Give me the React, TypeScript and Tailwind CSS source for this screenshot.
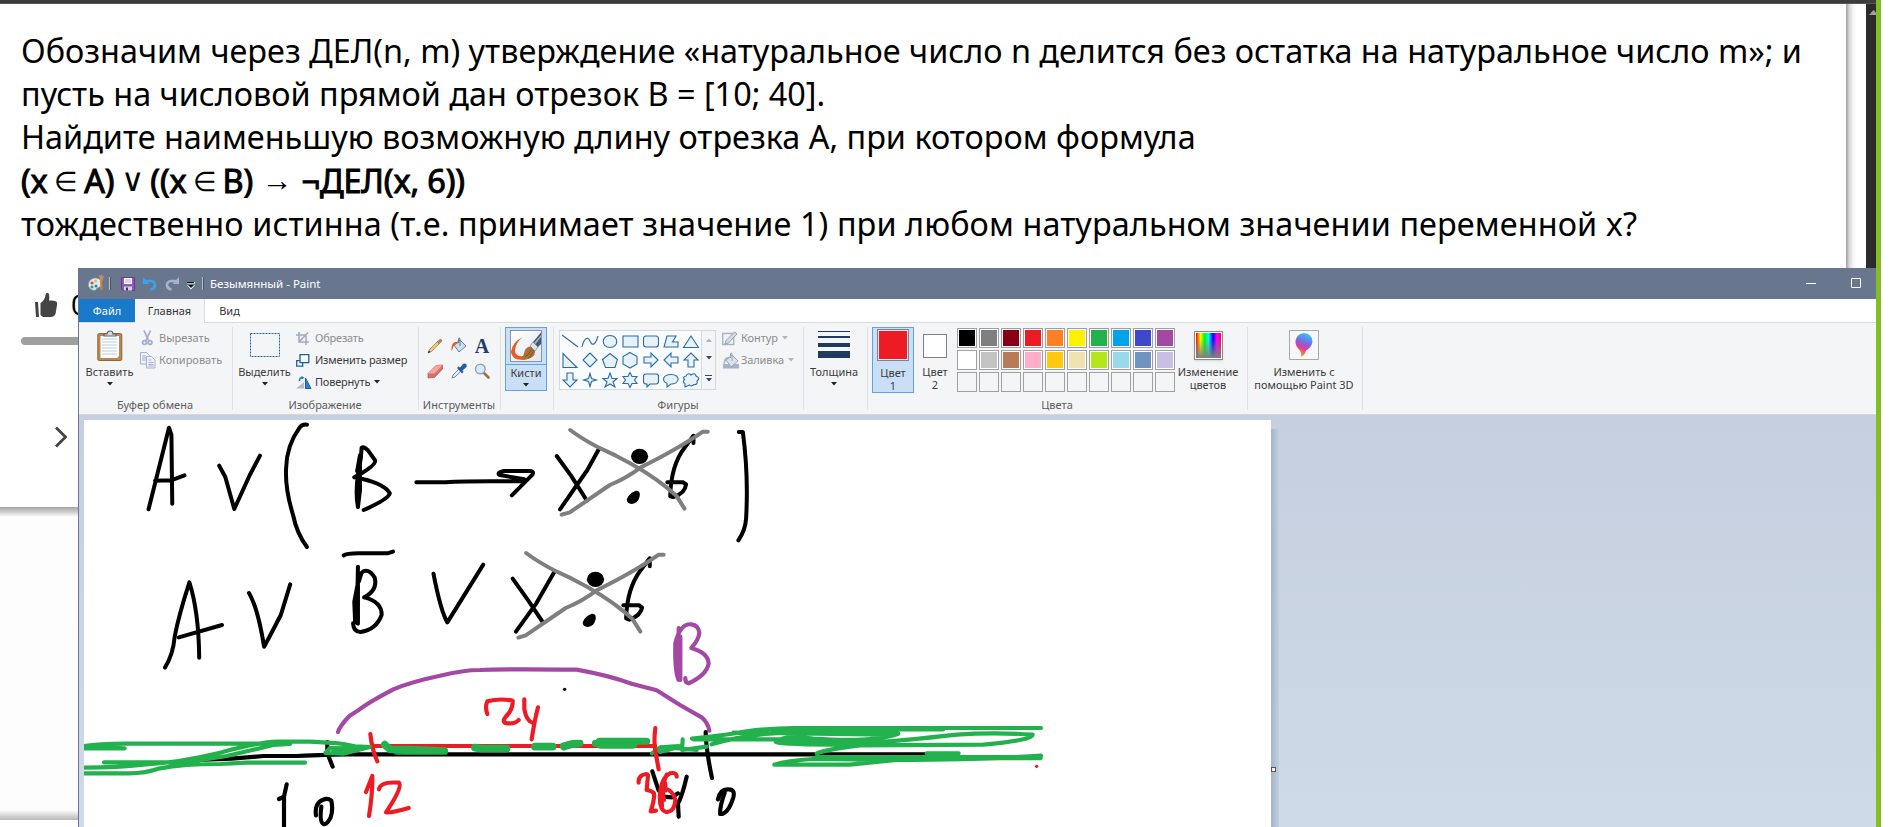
import type { ReactNode } from "react";

const Ui = "font-['Noto_Sans','Open_Sans',sans-serif]";

function Caret({ className = "text-[#222]" }: { className?: string }) {
  return (
    <svg width="6" height="4" viewBox="0 0 6 4" className={className}>
      <path d="M0 0h6L3 3.4z" fill="currentColor" />
    </svg>
  );
}

function Group({ width, label, children }: { width: string; label?: string; children: ReactNode }) {
  return (
    <div className={`${width} flex h-[91px] shrink-0 flex-col pt-1`}>
      <div className="relative flex h-[71px] border-r border-[#dfe1e4]">{children}</div>
      <div className="h-[12px] border-r border-[#dfe1e4] pr-px text-center leading-[14px] whitespace-nowrap text-[#5c5c5c]">{label}</div>
    </div>
  );
}

function Big({ width, icon, lines, caret, className = "" }: { width: string; icon: ReactNode; lines: string[]; caret?: boolean; className?: string }) {
  return (
    <div className={`${width} ${className} flex shrink-0 flex-col items-center whitespace-nowrap`}>
      <div className="flex h-[38px] items-center justify-center pb-0.5">{icon}</div>
      {lines.map((l) => (
        <div key={l} className="leading-[13px]">{l}</div>
      ))}
      {caret && <div className="pt-1"><Caret /></div>}
    </div>
  );
}

function Small({ icon, label, off, caret, className = "" }: { icon: ReactNode; label: string; off?: boolean; caret?: boolean; className?: string }) {
  return (
    <div className={`flex h-[22px] items-center whitespace-nowrap ${className} ${off ? "text-[#8d8d8d]" : ""}`}>
      <div className="flex w-[19px] items-center">{icon}</div>
      <span>{label}</span>
      {caret && <span className="ml-1"><Caret className={off ? "text-[#b5b5b5]" : "text-[#222]"} /></span>}
    </div>
  );
}

const shapes: string[] = [
  "M1 3L17 15",
  "M1 15C3 6 7 4 9 9S14 14 17 4",
  "M9 3.500C18 3.500 18 15.500 9 15.500S0 3.500 9 3.500",
  "M2 4h15v11H2z",
  "M4 4h10q2.500 0 2.500 3v5q0 3-2.500 3H4q-2.500 0-2.500-3V7q0-3 2.500-3z",
  "M5 4h9l-3.500 6H16v5H2z",
  "M9 4L16.500 15.500H1.500z",
  "M2 2.500V16.500H16z",
  "M9 2L16 9L9 16L2 9z",
  "M9 2.500L16.500 8.500L14 16.500H4.500L1.500 8.500z",
  "M9 1.500L16 5.500V13L9 17L2 13V5.500z",
  "M2 6H9V2L16 9L9 16V12H2z",
  "M16 6H9V2L2 9L9 16V12H16z",
  "M6 16V9H2L9 2L16 9H12V16z",
  "M6 2V9H2L9 16L16 9H12V2z",
  "M9 2.500L10.500 7.500L15.500 9L10.500 10.500L9 15.500L7.500 10.500L2.500 9L7.500 7.500z",
  "M9 2L11 7.500H16L12 11L14 16L9 13L4 16L6 11L2 7.500H7z",
  "M9 1.500L11 5.500H16L13.500 9L16 12.500H11L9 16.500L7 12.500H2L4.500 9L2 5.500H7z",
  "M4 3h10q2.500 0 2.500 2.500v5q0 2.500-2.500 2.500H8L5 16V13H4q-2.500 0-2.500-2.500v-5q0-2.500 2.500-2.500z",
  "M9 3.500C19 3.500 18 13 9 13L5 16L5 12.300C-1 10 1 3.500 9 3.500z",
  "M4 5Q6 1 9 4Q13 1 14 5Q19 7 15 10Q16 14 12 13.500Q9 16 7.500 14L3 16V12.500Q0 11 2.500 8.500Q0 6 4 5z",
];

const colorRows: string[][] = [
  ["bg-black", "bg-[#7f7f7f]", "bg-[#880015]", "bg-[#ed1c24]", "bg-[#ff7f27]", "bg-[#fff200]", "bg-[#22b14c]", "bg-[#00a2e8]", "bg-[#3f48cc]", "bg-[#a349a4]"],
  ["bg-white", "bg-[#c3c3c3]", "bg-[#b97a57]", "bg-[#ffaec9]", "bg-[#ffc90e]", "bg-[#efe4b0]", "bg-[#b5e61d]", "bg-[#99d9ea]", "bg-[#7092be]", "bg-[#c8bfe7]"],
];

const ClipboardIcon = (
  <svg width="26" height="31" viewBox="0 0 26 31">
    <rect x="0.800" y="3.500" width="24" height="27" rx="1.500" fill="#b98950" stroke="#8f6636" />
    <path d="M3.500 6h18.500v20l-2 2H3.500z" fill="#fff" />
    <path d="M5 9h15M5 12h15M5 15h15M5 18h15M5 21h15M5 24h15" stroke="#b8cbe0" />
    <path d="M7 6V4h3C10 0 16 0 16 4h3v2z" fill="#d8dade" stroke="#5c6068" strokeWidth="1.200" />
  </svg>
);

const ScissorsIcon = (
  <svg width="16" height="16" viewBox="0 0 16 16" fill="none" stroke="#a2b0ca" strokeWidth="1.800">
    <path d="M4 .5L8.500 10.500M10.500 .5L6 10.500" />
    <circle cx="4.500" cy="12.500" r="1.900" /><circle cx="10" cy="12.500" r="1.900" />
  </svg>
);

const CopyIcon = (
  <svg width="16" height="17" viewBox="0 0 16 17" fill="#eef2f9" stroke="#a5b2cb">
    <path d="M.5 .5h6l3 3v8.500h-9z" /><path d="M6.500 4.500h5l3.500 3.500v8H6.500z" />
    <path d="M2 4h4M2 6h4M2 8h4M8.500 8h3M8.500 10.500h5M8.500 12.500h5M8.500 14h5" />
  </svg>
);

const CropIcon = (
  <svg width="14" height="13" viewBox="0 0 14 13" fill="none" stroke="#9caac3" strokeWidth="1.500">
    <path d="M0 3h10v10M3 0v10h10M3 10L12 0.500" />
  </svg>
);

const ResizeIcon = (
  <svg width="14" height="13" viewBox="0 0 14 13" fill="#f8fbff" stroke="#1c5f9e" strokeWidth="1.300">
    <path d="M.7 6.700h6v5.500h-6z" /><path d="M4 .7h8.800v8H4z" />
  </svg>
);

const RotateIcon = (
  <svg width="16" height="13" viewBox="0 0 16 13">
    <path d="M0 12.500L8 6V12.500z" fill="#b9bcc0" />
    <path d="M9.500 2V12.500H15z" fill="#2a86c8" stroke="#1c5f9e" />
    <path d="M3.500 5Q3 1.500 7 1.500" fill="none" stroke="#1f78c8" strokeWidth="1.500" /><path d="M5.500 0L8.500 1.800L5.500 3.500z" fill="#1f78c8" />
  </svg>
);

function Bucket({ off }: { off?: boolean }) {
  return (
    <svg width="18" height="17" viewBox="0 0 18 17">
      {off && <path d="M1 12h16v4.500H1z" fill="#a9b3c6" />}
      <path d="M4 8L10 3L16 9L9 15z" fill={off ? "#dde3ec" : "#cfe0f2"} stroke={off ? "#97a4ba" : "#5f82a8"} />
      <path d="M10 9V2Q9.500 0 8.500 1.500V6" fill="none" stroke={off ? "#97a4ba" : "#5d7289"} />
      <path d="M7 5Q1 4 1.500 14Q3 13 3.500 9L8 6z" fill={off ? "#a9b3c6" : "#e55a2b"} />
    </svg>
  );
}

const PencilIcon = (
  <svg width="16" height="16" viewBox="0 0 16 16">
    <path d="M1 15L2.500 11.500L11.500 2.500L13.500 4.500L4.500 13.500z" fill="#efc878" stroke="#8f7040" strokeWidth=".7" />
    <path d="M1 15L2 12.500L3.500 14z" fill="#222" /><path d="M11.500 2.500L12.500 1.300Q13.500 .5 14.700 1.500Q15.500 2.500 15 3.300L13.500 4.700z" fill="#d46a6a" />
    <path d="M10.500 3.500L12.500 5.500" stroke="#5f8a5c" strokeWidth="1.200" />
  </svg>
);

const EraserIcon = (
  <svg width="17" height="15" viewBox="0 0 17 15">
    <path d="M1 9.500L9 1.500L15.500 1V5L7.500 13.500L1 14z" fill="#d9706c" stroke="#b6524f" strokeWidth=".7" />
    <path d="M1 9.500L9 1.500L15.500 1L7.500 9.500z" fill="#f5a5a0" />
  </svg>
);

const DropperIcon = (
  <svg width="16" height="16" viewBox="0 0 16 16">
    <path d="M1 15L2 12L8 6L10 8L4 14z" fill="#e7f1fb" stroke="#667c96" strokeWidth=".9" />
    <path d="M6 5L7.500 3.500L9 4.500L12 1Q14 0 15.300 1.200Q16.200 3 15 4.500L11.500 7.500L12.500 9L11 10.500z" fill="#235fa5" />
  </svg>
);

const MagnifierIcon = (
  <svg width="16" height="16" viewBox="0 0 16 16">
    <path d="M10 10L14.500 14.500" stroke="#9a7148" strokeWidth="2.600" strokeLinecap="round" />
    <circle cx="6.300" cy="6" r="4.800" fill="#d8ebfa" stroke="#93a5b8" strokeWidth="1.500" />
  </svg>
);

const BrushIcon = (
  <svg width="32" height="33" viewBox="0 0 32 33">
    <defs><linearGradient id="paper" x2="1" y2="1"><stop offset="0" stopColor="#fff" /><stop offset="1" stopColor="#dfe9f2" /></linearGradient></defs>
    <rect x=".5" y=".5" width="31" height="31" fill="url(#paper)" stroke="#8796a6" />
    <path d="M13 7Q2 12 1 22Q2 31 14 29.500Q22 29 25 24L13 26Q5 27 5 20Q6 12 13 7z" fill="#ee5a24" />
    <path d="M12 30Q13 26 15 20Q18 15 23 17Q27 22 23 26Q18 30 12 30z" fill="#aa7338" />
    <path d="M15 27Q20 24 22 18M18 28Q22 26 24 20" stroke="#84531f" fill="none" />
    <path d="M20 16L23 12L28 17L25 21z" fill="#dce3e9" stroke="#77838e" strokeWidth=".7" />
    <path d="M23 12L31 2.500V14L28 17z" fill="#44596e" /><path d="M24 13L31 5V7L25.500 14z" fill="#aab8c4" />
  </svg>
);

function TitleBar() {
  return (
    <div className="flex h-[31px] items-center bg-[#68778d] text-white">
      <svg width="16" height="17" viewBox="0 0 16 17" className="ml-[9px]">
        <path d="M7 3Q0 4 .5 11Q2 16 8 15Q8 12 11 12.500Q14 11 13 6Q11 3 7 3z" fill="#d9ecf6" stroke="#7fa7c0" strokeWidth=".6" />
        <circle cx="4" cy="8" r="1.600" fill="#e04a3f" /><circle cx="7.500" cy="6" r="1.500" fill="#f0bd28" /><circle cx="4" cy="12" r="1.600" fill="#41a84a" /><circle cx="8" cy="11" r="1.500" fill="#2d82d6" />
        <path d="M12 6h2l.5 9h-2z" fill="#df8030" /><path d="M11 0L16 1L14.500 6H12z" fill="#c58b63" />
      </svg>
      <i className="ml-[5px] h-[13px] w-[2px] border-r border-[#4a5669] bg-[#b7bfc9]" />
      <svg width="14" height="14" viewBox="0 0 14 14" className="ml-[10px]">
        <path d="M.5 .5h13v13H2L.5 12z" fill="#8c5bb5" stroke="#643a8c" /><path d="M3 1h8v6H3z" fill="#fff" /><path d="M4 3h6M4 5h6" stroke="#b9a5cc" /><path d="M3 9.500h8v4H3z" fill="#d9cfe3" /><path d="M5 10.500h2v3H5z" fill="#40315a" />
      </svg>
      <svg width="14" height="14" viewBox="0 0 14 14" className="ml-[8px]">
        <path d="M3 4H8Q12.500 4.500 12 9Q11 12 7.500 12.500" fill="none" stroke="#35a5ec" strokeWidth="2.600" /><path d="M0 0V7H6.500z" fill="#35a5ec" />
      </svg>
      <svg width="14" height="14" viewBox="0 0 14 14" className="ml-[8px]">
        <path d="M11 4H6Q1.500 4.500 2 9Q3 12 6.500 12.500" fill="none" stroke="#a5b5c9" strokeWidth="2.600" /><path d="M14 0V7H7.500z" fill="#a5b5c9" />
      </svg>
      <svg width="8" height="8" viewBox="0 0 8 8" className="mt-1 ml-[8px]">
        <path d="M0 0h8v1.500H0zM0 3h8L4 7.500z" fill="#fff" /><path d="M1 3h6L4 6z" fill="#111" /><path d="M0 0h7v1H0z" fill="#111" />
      </svg>
      <i className="ml-[7px] h-[13px] w-[2px] border-r border-[#4a5669] bg-[#b7bfc9]" />
      <span className="ml-[6px] text-[11.500px] whitespace-nowrap">Безымянный - Paint</span>
      <svg width="56" height="11" viewBox="0 0 56 11" className="mr-[15px] ml-auto" fill="none" stroke="#fff">
        <path d="M1 5.500h10M46.500 .5h9v9h-9z" />
      </svg>
    </div>
  );
}

function Ribbon() {
  return (
    <div className="flex h-[92px] border-b border-[#d5d7da] bg-[#f4f5f7] text-[#3c3c3c]">
      <Group width="w-[154px]" label="Буфер обмена">
        <Big width="w-[61px]" icon={ClipboardIcon} lines={["Вставить"]} caret />
        <div>
          <Small off icon={ScissorsIcon} label="Вырезать" />
          <Small off icon={CopyIcon} label="Копировать" />
        </div>
      </Group>
      <Group width="w-[186px]" label="Изображение">
        <Big
          width="w-[63px]"
          icon={<svg width="30" height="24" viewBox="0 0 30 24"><path d="M.5 .5h29v23H.5z" fill="none" stroke="#1c66a6" strokeDasharray="2 1" /></svg>}
          lines={["Выделить"]}
          caret
        />
        <div className="tracking-[-0.2px]">
          <Small off icon={CropIcon} label="Обрезать" />
          <Small icon={ResizeIcon} label="Изменить размер" />
          <Small icon={RotateIcon} label="Повернуть" caret />
        </div>
      </Group>
      <Group width="w-[82px]" label="Инструменты">
        <div className="grid h-[57px] grid-cols-[24px_23px_23px] grid-rows-2 place-items-center pt-[6px] pl-[4px]">
          {PencilIcon}
          <Bucket />
          <span className="pl-px font-['Liberation_Serif',serif] text-[20px] leading-[16px] font-bold text-[#1f3c66]">A</span>
          {EraserIcon}
          {DropperIcon}
          {MagnifierIcon}
        </div>
      </Group>
      <Group width="w-[53px]">
        <div className="ml-1 flex h-[64px] w-[42px] flex-col items-center border border-[#62a2e4] bg-[#c9dff5]">
          <div className="flex h-[37px] w-full justify-center border-b border-[#62a2e4] pt-[2px]">{BrushIcon}</div>
          <div className="pt-px leading-[13px]">Кисти</div>
          <div className="pt-1"><Caret /></div>
        </div>
      </Group>
      <Group width="w-[250px]" label="Фигуры">
        <div className="mt-[3px] ml-[5px] flex h-[60px] w-[157px] shrink-0 border border-[#d5d8dc] bg-[#fafbfc]">
          <div className="grid w-[141px] grid-cols-7 grid-rows-3">
            {shapes.map((d, i) => (
              <svg key={i} width="18" height="18" viewBox="0 0 18 18" className="m-px">
                <path d={d} fill={i < 2 ? "none" : "#e6f1f8"} stroke="#2b6ca3" strokeWidth="1.100" />
              </svg>
            ))}
          </div>
          <div className="flex w-[14px] flex-col items-center justify-around border-l border-[#d5d8dc] bg-[#f4f5f7]">
            <span className="rotate-180"><Caret className="text-[#a9b1bb]" /></span>
            <Caret className="text-[#3a4a66]" />
            <div className="flex flex-col items-center gap-0.5"><i className="h-px w-[7px] bg-[#3a4a66]" /><Caret className="text-[#3a4a66]" /></div>
          </div>
        </div>
        <div className="pl-[6px]">
          <Small
            off
            caret
            className="tracking-[-0.1px]"
            icon={<svg width="16" height="15" viewBox="0 0 16 15"><path d="M.7 2.500h11v11H.7z" fill="none" stroke="#a9b4c6" strokeWidth="1.400" /><path d="M3 13L4 9.500L12.500 1L15 3L6.500 12z" fill="#d4dbe6" stroke="#93a1b8" /></svg>}
            label="Контур"
          />
          <Small off caret className="tracking-[-0.1px]" icon={<Bucket off />} label="Заливка" />
        </div>
      </Group>
      <Group width="w-[64px]">
        <Big
          width="w-[60px]"
          icon={<svg width="32" height="28" viewBox="0 0 32 28" fill="#20395f"><path d="M0 0h32v1H0zM0 5h32v2H0zM0 12h32v4H0zM0 20h32v7H0z" /></svg>}
          lines={["Толщина"]}
          caret
        />
      </Group>
      <Group width="w-[380px]" label="Цвета">
        <Big
          width="w-[42px]"
          className="ml-1 h-[66px] border border-[#62a2e4] bg-[#c9dff5]"
          icon={<i className="mb-0.5 block h-[32px] w-[32px] border border-[#7c858d] bg-[#ed1c24] shadow-[inset_0_0_0_1px_#dce9f5]" />}
          lines={["Цвет", "1"]}
        />
        <Big width="w-[42px]" icon={<i className="mt-0.5 block h-[24px] w-[24px] border border-[#808080] bg-white" />} lines={["Цвет", "2"]} />
        <div className="mt-px ml-px grid h-[64px] w-[218px] shrink-0 grid-cols-10 gap-[2px]">
          {colorRows.flat().map((c) => (
            <i key={c} className="block h-[20px] w-[20px] border border-[#a0a0a0] bg-white p-px"><b className={`${c} block h-full w-full`} /></i>
          ))}
          {colorRows[0].map((c) => (
            <i key={c} className="block h-[20px] w-[20px] border border-[#a0a0a0] bg-[#f4f5f7]" />
          ))}
        </div>
        <Big
          width="w-[66px]"
          icon={
            <i className="block h-[29px] w-[29px] border border-[#8b8b8b] bg-white p-px shadow-sm">
              <b className="block h-full w-full bg-[linear-gradient(to_bottom,transparent_20%,#808080),linear-gradient(to_right,#f00,#ff0_18%,#0f0_34%,#0ff_50%,#00f_68%,#f0f_84%,#f03)]" />
            </i>
          }
          lines={["Изменение", "цветов"]}
        />
      </Group>
      <Group width="w-[115px]">
        <Big
          width="w-[112px]"
          icon={
            <svg width="30" height="30" viewBox="0 0 30 30">
              <defs><linearGradient id="drop" x1=".7" y1="0" x2=".4" y2="1"><stop offset="0" stopColor="#28d2ee" /><stop offset=".4" stopColor="#7a68e8" /><stop offset=".65" stopColor="#dc3f96" /><stop offset="1" stopColor="#f7a51c" /></linearGradient></defs>
              <path d="M.5 .5h29v29H.5z" fill="#f7f7f7" stroke="#a9a9a9" />
              <path d="M15 3Q23 3.500 23.500 11.500Q23 17 17 20.500Q16 25 12 27Q13 22 9.500 19Q6 15 6.500 10.500Q8 3.500 15 3z" fill="url(#drop)" />
            </svg>
          }
          lines={["Изменить с", "помощью Paint 3D"]}
        />
      </Group>
    </div>
  );
}

const formulaInk: string[] = [
  "M70 283L120 38L126 60L128 266M86 197L125 196L158 181",
  "M243 152L258 186L280 282L318 180L343 122",
  "M458 29Q446 27 440 38Q408 92 407 160Q404 220 424 300Q433 355 458 396",
  "M583 276Q574 222 590 130L592 98Q598 94 608 107L625 136Q628 152 574 187Q646 203 661 235Q658 252 597 285M583 276L588 225V120L581 168",
  "M726 202H790Q830 197 990 199M960 241L1011 178Q1015 166 1000 168H940Q922 174 930 180L990 193",
  "M1070 123L1105 182L1143 255M1173 103L1145 165L1078 283",
  "M1405 84V62L1384 97Q1350 150 1348 244L1356 246Q1384 236 1387 208L1380 202H1341",
  "M1516 51H1526Q1540 180 1534 310Q1532 346 1515 376",
  "M548 421Q556 413 600 415H655L669 410",
  "M110 758Q130 720 134 665Q144 600 170 502Q193 590 194 728M144 667L250 630",
  "M316 534Q338 580 353 695Q358 685 394 600L417 508",
  "M583 455L582 510L574 560L576 620L583 626M583 470V622M585 500L592 473Q608 456 624 488Q632 525 598 547Q642 560 641 600Q627 645 589 651Q572 650 571 625",
  "M768 476Q786 590 802 622L890 449",
  "M962 491L1000 556L1035 620M1064 471L1020 565L970 650",
  "M1298 454V430L1276 465Q1242 520 1240 610L1248 614Q1276 602 1279 578L1272 571H1233",
];

const greenInk: string[] = [
  "M0 380Q40 372 140 371H630M0 385H134M0 378H120M0 443Q110 443 190 434Q300 427 420 398Q540 366 590 365H690Q745 367 790 372M72 427H345M0 460H135Q190 462 240 445Q310 432 420 432L500 428H675M300 430L440 408L580 375L630 372",
  "M790 372L825 379L870 381L790 401L736 399L750 384L820 385M760 392L830 382",
];

function Drawing() {
  return (
    <svg width="1187" height="407" viewBox="84 420 1187 407" className="block bg-white" fill="none" strokeLinecap="round" strokeLinejoin="round" strokeWidth="4">
      <g transform="translate(120 415) scale(.40816 .33333)" stroke="#000">
        {formulaInk.map((d) => (
          <path key={d} d={d} vectorEffect="non-scaling-stroke" />
        ))}
        <g fill="#000" stroke="none">
          <ellipse cx="1273" cy="124" rx="21" ry="23" /><ellipse cx="1165" cy="493" rx="21" ry="23" />
          <path d="M1242 252Q1246 235 1264 227Q1276 226 1273 245Q1269 265 1254 267Q1240 265 1242 252zM1134 621Q1138 604 1156 596Q1168 595 1165 614Q1161 634 1146 636Q1132 634 1134 621z" />
        </g>
        <g stroke="#7f7f7f">
          <path d="M1103 45Q1130 70 1170 96L1215 122Q1290 168 1340 218L1363 242L1383 281M1440 50H1428Q1370 100 1276 157Q1240 190 1200 210L1102 292L1082 299" vectorEffect="non-scaling-stroke" />
          <path d="M995 414Q1022 439 1062 465L1107 491Q1182 537 1232 587L1255 611L1275 650M1332 419H1320Q1262 469 1168 526Q1132 559 1092 579L994 661L976 668" vectorEffect="non-scaling-stroke" />
        </g>
      </g>
      <g transform="translate(80 620) scale(.33333)" strokeWidth="12.500">
        <path d="M350 420L455 416L550 408L650 408Q750 403 800 403H2537M742 366V400L758 440M620 493L612 530V640M597 537L612 530M708 586Q704 560 718 546Q738 530 754 542Q760 570 752 592Q740 616 730 612Q718 606 724 560" stroke="#000" />
        <circle cx="1454" cy="208" r="5" fill="#000" />
        <path d="M774 336Q778 320 808 288L835 271Q860 250 940 208Q990 186 1080 167Q1150 150 1200 150Q1260 147 1490 149Q1580 165 1655 191L1730 211Q1760 230 1800 255L1865 292Q1884 308 1888 332" stroke="#a349a4" />
        <path d="M876 378H1725M871 342Q876 390 892 424M877 468Q878 520 867 588M877 468L858 516M897 508Q900 484 957 488Q970 500 918 577Q930 580 986 564M1222 282Q1214 262 1222 244Q1260 234 1298 242Q1300 268 1276 292Q1264 308 1282 310Q1306 312 1316 300M1333 238V268Q1340 304 1358 308M1374 262Q1364 300 1355 358" stroke="#ed1c24" />
        {greenInk.map((d) => (
          <path key={d} d={d} stroke="#22b14c" />
        ))}
        <path d="M914 374L930 388L985 389L1093 393M950 393H1090M1185 383L1205 386H1280M1365 380H1418M1452 380Q1470 370 1494 371" stroke="#22b14c" strokeWidth="23" />
      </g>
      <g transform="translate(560 600) scale(.33333)" strokeWidth="12.500">
        <path d="M437 396Q438 450 456 534M277 514L296 572M380 530Q366 590 354 610L356 650M354 580L336 592L310 590M474 598Q480 566 506 568Q526 568 520 592Q504 644 480 642Q480 616 494 578" stroke="#000" />
        <path d="M356 84V240Q344 216 346 130Q360 70 394 73Q416 76 418 98Q416 120 394 144Q444 158 446 190Q440 225 386 250Q374 246 376 234M361 110V240" stroke="#a349a4" />
        <path d="M106 430L118 432H222M118 424H260M122 436H218M10 438L60 430" stroke="#22b14c" strokeWidth="21" />
        <path d="M640 392L860 394L980 399M660 424H860M770 473H1440" stroke="#22b14c" strokeWidth="16" />
        <path d="M276 460L300 442L356 438M300 456L360 440M368 418L366 450L440 440M340 444L410 450M396 416Q500 406 560 394Q640 384 700 384H1443M455 433Q570 398 700 398M400 418H700M660 388L900 388L1150 388M520 398L980 404M640 400Q720 388 1015 401Q940 428 760 416Q670 402 648 426Q670 434 860 434Q1050 420 1190 404Q1300 396 1418 404Q1420 420 1270 434L900 436Q800 448 770 460M660 418L760 420L940 422M643 494H870Q970 484 1080 472M643 494Q680 482 760 477L1000 480Q1300 478 1443 467M1100 460H1196" stroke="#22b14c" />
        <path d="M286 384Q280 430 288 464L296 508M236 548Q234 534 246 526Q262 518 264 526L260 570Q276 572 282 580Q284 600 272 634L288 632M350 530Q350 516 330 520Q306 530 300 580Q296 630 318 636Q344 636 346 600Q340 574 318 566Q302 572 306 620M320 524L306 560L312 600M316 550V572" stroke="#ed1c24" />
        <circle cx="1430" cy="499" r="5" fill="#ed1c24" />
      </g>
    </svg>
  );
}

function PaintWindow() {
  return (
    <div className={`absolute top-[268px] left-[78px] h-[559px] w-[1798px] overflow-hidden border-l border-[#68778d] text-[11px] ${Ui}`}>
      <TitleBar />
      <div className="flex h-[24px] items-stretch border-b border-[#dadbdc] bg-white text-center leading-[23px] text-[#333]">
        <div className="h-[23px] w-[56px] bg-[#1979ca] text-white">Файл</div>
        <div className="h-[24px] w-[70px] border-r border-[#dadbdc] bg-[#f4f5f7]">Главная</div>
        <div className="w-[49px]">Вид</div>
      </div>
      <Ribbon />
      <div className="flex h-[412px] bg-linear-to-b from-[#c5cfdf] to-[#cfdae8] pt-[5px] pl-[5px]">
        <Drawing />
        <div className="relative mt-[9px] h-[403px] w-[8px] bg-linear-to-r from-[#a6b3c8] to-[#c3cfdf]">
          <i className="absolute top-[338px] left-0 h-[5px] w-[5px] border border-[#555] bg-white" />
        </div>
      </div>
    </div>
  );
}

export default function App() {
  return (
    <div className="relative flex h-[827px] w-[1901px] overflow-hidden bg-white">
      <div className="w-[1876px]">
        <div className="h-[4px] border-b border-[#555] bg-[#3c3c3c]" />
        <div className="flex h-[823px]">
          <div className="flex w-[1846px] flex-col">
            <main className="h-[503px] pt-[25px] pl-[21px] font-['Noto_Sans','Open_Sans',sans-serif] text-[32.400px] leading-[43.200px] whitespace-nowrap text-black">
              <p>Обозначим через ДЕЛ(n, m) утверждение «натуральное число n делится без остатка на натуральное число m»; и</p>
              <p>пусть на числовой прямой дан отрезок B = [10; 40].</p>
              <p>Найдите наименьшую возможную длину отрезка A, при котором формула</p>
              <p className="flex h-[43.200px] tracking-[-0.120px] [-webkit-text-stroke:1px_#000]">
                <span>(x</span>
                <span className="w-[36.500px] text-center text-[27px] [-webkit-text-stroke:0]">∈</span>
                <span>A)</span>
                <span className="w-[36px] text-center font-['Liberation_Sans',sans-serif] text-[32px] [-webkit-text-stroke:0]">∨</span>
                <span>((x</span>
                <span className="w-[36px] text-center text-[27px] [-webkit-text-stroke:0]">∈</span>
                <span>B)</span>
                <span className="w-[48.500px] text-center font-['Liberation_Serif',serif] text-[31px] [-webkit-text-stroke:0]">→</span>
                <span>¬ДЕЛ(x, 6))</span>
              </p>
              <p className="tracking-[0.09px]">тождественно истинна (т.е. принимает значение 1) при любом натуральном значении переменной x?</p>
              <div className="mt-[38px] ml-[13px] flex h-[44px] items-center">
                <svg width="24" height="26" viewBox="0 0 24 26" fill="#444">
                  <path d="M1 10h3l1 15H2zM6.500 11Q11 8 11.500 3Q12 0 14 1Q16 2 15 8.500Q22 8 23 10.500V13L21.500 22Q20 25 17 25H9L6.500 23z" />
                </svg>
                <span className="ml-[13px] text-[28px]">0</span>
              </div>
              <div className="mt-[10px] h-[8px] w-[200px] rounded-full bg-[#9f9f9f]" />
              <svg width="12" height="22" viewBox="0 0 12 22" className="mt-[81px] ml-[34px]" fill="none" stroke="#444" strokeWidth="2.800"><path d="M1 1.500L10.500 11L1 20.500" /></svg>
            </main>
            <div className="flex h-[313px] flex-col justify-between bg-[#fdfdfd]">
              <div className="h-[10px] bg-linear-to-b from-[#a3a3a3] to-[#fdfdfd]" />
              <div className="h-[10px] bg-linear-to-t from-[#b8b8b8] to-[#fdfdfd]" />
            </div>
          </div>
          <div className="w-[20px] bg-[linear-gradient(to_right,#9c9c9c,#d5d5d5_3px,#f5f5f5_7px,#fff_11px)]" />
          <div className="w-[10px] bg-[#2b2b2b] pt-[6px] pl-[3px]">
            <svg width="7" height="5" viewBox="0 0 7 5"><path d="M0 5L4.500 0L7 2.500V5z" fill="#a0a0a0" /></svg>
          </div>
        </div>
      </div>
      <div className="w-[5px] bg-[#86bc25]" />
      <PaintWindow />
    </div>
  );
}
